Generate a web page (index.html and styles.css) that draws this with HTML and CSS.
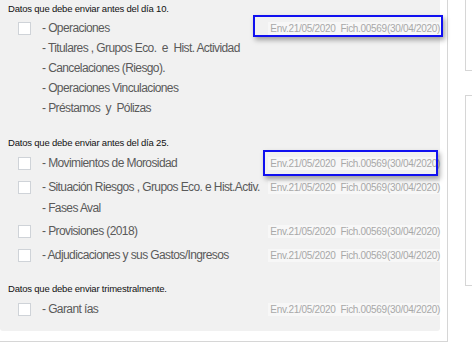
FILE: index.html
```html
<!DOCTYPE html>
<html lang="es">
<head>
    <meta charset="UTF-8">
    <title>Envíos</title>
    <link rel="stylesheet" href="styles.css">
</head>
<body>
    <div class="page">
        <div class="main-card">
            <div class="panel">
                <div class="section">
                    <div class="section-title">Datos que debe enviar antes del día 10.</div>
                    <div class="item">
                        <span class="box"></span>
                        <span class="label">- Operaciones</span>
                        <span class="sent">Env.21/05/2020&nbsp; Fich.00569(30/04/2020)</span>
                    </div>
                    <div class="item">
                        <span class="box hidden"></span>
                        <span class="label">- Titulares , Grupos Eco.&nbsp; e&nbsp; Hist. Actividad</span>
                    </div>
                    <div class="item">
                        <span class="box hidden"></span>
                        <span class="label">- Cancelaciones (Riesgo).</span>
                    </div>
                    <div class="item">
                        <span class="box hidden"></span>
                        <span class="label">- Operaciones Vinculaciones</span>
                    </div>
                    <div class="item">
                        <span class="box hidden"></span>
                        <span class="label">- Préstamos&nbsp; y&nbsp; Pólizas</span>
                    </div>
                </div>

                <div class="section second">
                    <div class="section-title">Datos que debe enviar antes del día 25.</div>
                    <div class="item tall">
                        <span class="box"></span>
                        <span class="label">- Movimientos de Morosidad</span>
                        <span class="sent">Env.21/05/2020&nbsp; Fich.00569(30/04/2020)</span>
                    </div>
                    <div class="item tall">
                        <span class="box"></span>
                        <span class="label">- Situación Riesgos , Grupos Eco. e Hist.Activ.</span>
                        <span class="sent">Env.21/05/2020&nbsp; Fich.00569(30/04/2020)</span>
                    </div>
                    <div class="item">
                        <span class="box hidden"></span>
                        <span class="label">- Fases Aval</span>
                    </div>
                    <div class="item tall">
                        <span class="box"></span>
                        <span class="label">- Provisiones (2018)</span>
                        <span class="sent">Env.21/05/2020&nbsp; Fich.00569(30/04/2020)</span>
                    </div>
                    <div class="item tall">
                        <span class="box"></span>
                        <span class="label">- Adjudicaciones y sus Gastos/Ingresos</span>
                        <span class="sent">Env.21/05/2020&nbsp; Fich.00569(30/04/2020)</span>
                    </div>
                </div>

                <div class="section third">
                    <div class="section-title">Datos que debe enviar trimestralmente.</div>
                    <div class="item tall">
                        <span class="box"></span>
                        <span class="label">- Garant ías</span>
                        <span class="sent">Env.21/05/2020&nbsp; Fich.00569(30/04/2020)</span>
                    </div>
                </div>

                <!-- annotation highlights -->
                <div class="highlight first-mark"></div>
                <div class="highlight second-mark"></div>
            </div>
        </div>

        <div class="side">
            <div class="side-box top-box"></div>
            <div class="side-box lower-box"></div>
        </div>
    </div>
</body>
</html>
```

FILE: styles.css
```css
* {
    margin: 0;
    padding: 0;
    box-sizing: border-box;
}

body {
    width: 472px;
    height: 354px;
    overflow: hidden;
    background: white;
    font-family: 'Liberation Sans', Arial, sans-serif;
}

.page {
    display: flex;
    align-items: flex-start;
}

/* Main card */
.main-card {
    width: 448px;
    height: 342px;
    flex-shrink: 0;
    padding: 0 7px 10px 0;
    border-right: 1px solid #d6d6d6;
    border-bottom: 1px solid #d6d6d6;
}

.panel {
    position: relative;
    height: 100%;
    background: #f1f1f1;
    border-radius: 0 0 3px 3px;
    padding-top: 2px;
}

.section.second {
    margin-top: 18px;
}

.section.third {
    margin-top: 16px;
}

.section-title {
    height: 14px;
    line-height: 14px;
    padding-left: 8px;
    margin-bottom: 2px;
    font-size: 9.5px;
    letter-spacing: -0.2px;
    color: #111;
    white-space: nowrap;
}

.item {
    display: flex;
    align-items: center;
    height: 20px;
    padding-left: 18px;
}

.item.tall {
    height: 22px;
    margin-top: 2px;
}

.box {
    width: 13px;
    height: 13px;
    flex-shrink: 0;
    background: white;
    border: 1px solid #cfd3d8;
    margin-right: 11px;
}

.box.hidden {
    visibility: hidden;
}

.label {
    font-size: 12px;
    letter-spacing: -0.6px;
    color: #5a5a5a;
    white-space: nowrap;
}

.sent {
    margin-left: auto;
    padding: 1px 0 1px 2px;
    background: #f7f7f7;
    font-size: 10px;
    letter-spacing: -0.3px;
    color: #a8a8a8;
    white-space: nowrap;
}

/* Blue annotation boxes drawn over the list */
.highlight {
    position: absolute;
    border: 2px solid #1010f0;
    box-shadow: 2px 3px 5px rgba(0, 0, 0, 0.35);
}

.first-mark {
    left: 253px;
    top: 15px;
    width: 190px;
    height: 22px;
}

.second-mark {
    left: 263px;
    top: 150px;
    width: 175px;
    height: 26px;
}

/* Right column, cut off by the window edge */
.side {
    margin-left: 17px;
    width: 7px;
    flex-shrink: 0;
}

.side-box {
    border: 1px solid #d6d6d6;
    border-right: none;
}

.top-box {
    height: 71px;
    border-top: none;
}

.lower-box {
    margin-top: 24px;
    height: 191px;
}
```
